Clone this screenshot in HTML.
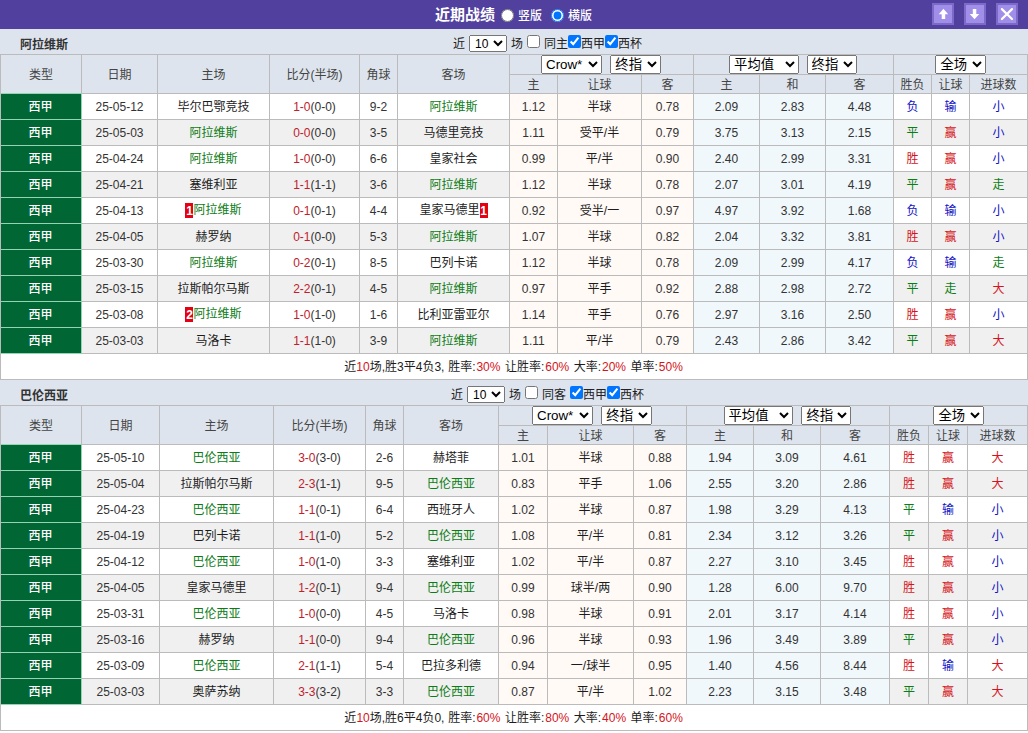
<!DOCTYPE html>
<html lang="zh-CN">
<head>
<meta charset="utf-8">
<title>近期战绩</title>
<style>
html,body{margin:0;padding:0;background:#fff;}
body{width:1028px;height:733px;overflow:hidden;position:relative;font-family:"Liberation Sans","Noto Sans CJK SC",sans-serif;font-size:12px;color:#333;}
#top{position:absolute;left:0;top:0;width:1028px;height:29px;background:#51409e;color:#fff;}
.ttl{position:absolute;left:0;top:0;width:1028px;height:29px;line-height:29px;white-space:nowrap;}
.ttl b{position:absolute;left:435px;top:0;font-size:15px;font-weight:700;}
.ttl input{position:absolute;margin:0;width:13px;height:13px;top:9px;}
.ttl .r1{left:501px;}
.ttl .r2{left:551px;}
.ttl span{position:absolute;top:2px;font-weight:500;}
.ttl .l1{left:518px;}
.ttl .l2{left:568px;}
.btns{position:absolute;right:0;top:0;}
.bt{position:absolute;top:3px;width:18px;height:18px;border:2px solid #7b6ac8;background:#a08ee8;}
.bt svg{display:block;}
.bt:nth-child(1){left:-96px;}
.bt:nth-child(2){left:-64px;}
.bt:nth-child(3){left:-32px;}
.cap{position:absolute;left:0;width:1028px;height:25px;background:#dee4ee;line-height:25px;white-space:nowrap;}
.cap1{top:29px;}
.cap2{top:380px;}
.cap .team{position:absolute;left:20px;top:4px;}
.cap span{position:absolute;top:3px;color:#222;}
.cap select{position:absolute;top:6px;width:37.5px;height:17px;font:12px "Liberation Sans","Noto Sans CJK SC",sans-serif;padding:0 1px 0 1px;margin:0;}
.cap input{position:absolute;top:6px;width:13px;height:13px;margin:0;}
.cap1 .k1{left:453px;} .cap1 .s10{left:469px;} .cap1 .k2{left:511px;} .cap1 .c1{left:527px;} .cap1 .k3{left:544px;}
.cap1 .c2{left:568px;} .cap1 .k4{left:581px;} .cap1 .c3{left:605px;} .cap1 .k5{left:618px;}
.cap2 .k1{left:451px;} .cap2 .s10{left:467px;} .cap2 .k2{left:509px;} .cap2 .c1{left:525px;} .cap2 .k3{left:542px;}
.cap2 .c2{left:570px;} .cap2 .k4{left:583px;} .cap2 .c3{left:607px;} .cap2 .k5{left:620px;}
table.tb{position:absolute;left:0;width:1028px;border-collapse:collapse;table-layout:fixed;}
.tb1{top:54px;}
.tb2{top:405px;}
.tb td,.tb th{border:1px solid #bbb;padding:0;text-align:center;font-weight:normal;white-space:nowrap;overflow:hidden;}
.tb td,.tb th{line-height:16px;}
.tb td{color:#1c1c1c;}
.tb td.n{color:#333;}
.tb th{background:#dee4ee;color:#444;padding-top:2px;}
.tb th.sc{padding:0;line-height:0;}
.tb tr.h1{height:20px;}
.tb tr.h2{height:19px;}
.tb tr.o,.tb tr.e,.tb tr.sm{height:26px;}
.tb tr.o td{background:#fff;}
.tb tr.e td{background:#f0f0f0;}
.tb tr td.as{background:#fffaf6;}
.tb tr td.eu{background:#f0f8fc;}
.tb tr td.lg{background:#006633;color:#fff;position:relative;overflow:visible;font-weight:500;}
.tb tr td.lg i{font-style:normal;position:relative;top:0;left:-0.5px;}
.tb tr td.lg::after{content:"";position:absolute;left:0;top:-1px;right:-1px;bottom:-1px;border:solid #96d2b4;border-width:1px 1px 1px 0;}
.tb tr.sm td{background:#fff;}
.tb th.sc{font-size:0;}
.tb select{height:19px;font:13.333px "Liberation Sans","Noto Sans CJK SC",sans-serif;padding:0;margin:0;vertical-align:top;}
.tb select{position:relative;}
.tb select.s1{left:-0.9px;width:60.5px !important;}
.tb select.s2{margin-left:8.3px;left:-0.4px;}
.tb select.s3{left:-0.7px;}
.tb select.s4{margin-left:7.5px;left:-0.7px;}
.tb2 select.s3{left:-1px;width:69.5px !important;}
.tb2 select.s4{left:-0.1px;}
.g,.tb td.g{color:#0c7c16;}
.r,.tb td.r{color:#d41420;}
.tb tr.sm td{word-spacing:0.42px;}
.tb tr.sm .p{padding:0 0.8px 0 0.9px;}
.b,.tb td.b{color:#1010c4;}
.sr{color:#c0202c;}
.rc{background:#e60012;color:#fff;font-weight:bold;display:inline-block;width:8px;height:15px;line-height:17px;vertical-align:middle;position:relative;top:-1px;overflow:hidden;}

</style>
</head>
<body>
<div id="top">
<div class="ttl"><b>近期战绩</b><input type="radio" name="v" class="r1"><span class="l1">竖版</span><input type="radio" name="v" class="r2" checked><span class="l2">横版</span></div>
<div class="btns">
<span class="bt"><svg width="18" height="18" viewBox="0 0 18 18"><path d="M9.45 3.7 L14.15 9.2 H11.2 V14.1 H7.7 V9.2 H4.75 Z" fill="#fff"/></svg></span>
<span class="bt"><svg width="18" height="18" viewBox="0 0 18 18"><path d="M8.5 14.2 L13.25 9 H10.3 V3.9 H6.8 V9 H3.75 Z" fill="#fff"/></svg></span>
<span class="bt"><svg width="18" height="18" viewBox="0 0 18 18"><path d="M3.9 4.1 L14 14 M14 4.1 L3.9 14" stroke="#fff" stroke-width="2.2" stroke-linecap="round" fill="none"/></svg></span>
</div>
</div>
<div class="cap cap1"><b class="team">阿拉维斯</b><span class="k1">近</span><select class="s10"><option>10</option></select><span class="k2">场</span><input type="checkbox" class="c1"><span class="k3">同主</span><input type="checkbox" class="c2" checked><span class="k4">西甲</span><input type="checkbox" class="c3" checked><span class="k5">西杯</span></div>
<table class="tb tb1"><colgroup><col style="width:81px"><col style="width:76px"><col style="width:112px"><col style="width:90px"><col style="width:38px"><col style="width:112px"><col style="width:48px"><col style="width:84px"><col style="width:52px"><col style="width:66px"><col style="width:66px"><col style="width:68px"><col style="width:38px"><col style="width:38px"><col style="width:58px"></colgroup>
<tr class="h1"><th rowspan="2">类型</th><th rowspan="2">日期</th><th rowspan="2">主场</th><th rowspan="2">比分(半场)</th><th rowspan="2">角球</th><th rowspan="2">客场</th><th colspan="3" class="sc"><select class="sa s1" style="width:60px"><option>Crow*</option></select><select class="sb s2" style="width:50.4px"><option>终指</option></select></th><th colspan="3" class="sc"><select class="sa s3" style="width:70px"><option>平均值</option></select><select class="sb s4" style="width:50px"><option>终指</option></select></th><th colspan="3" class="sc"><select class="sa s5" style="width:50.2px"><option>全场</option></select></th></tr>
<tr class="h2"><th>主</th><th>让球</th><th>客</th><th>主</th><th>和</th><th>客</th><th>胜负</th><th>让球</th><th>进球数</th></tr>
<tr class="o"><td class="lg"><i>西甲</i></td><td class="n">25-05-12</td><td>毕尔巴鄂竞技</td><td class="n"><span class="sr">1-0</span>(0-0)</td><td class="n">9-2</td><td><span class="g">阿拉维斯</span></td><td class="as n">1.12</td><td class="as">半球</td><td class="as n">0.78</td><td class="eu n">2.09</td><td class="eu n">2.83</td><td class="eu n">4.48</td><td class="b">负</td><td class="b">输</td><td class="b">小</td></tr>
<tr class="e"><td class="lg"><i>西甲</i></td><td class="n">25-05-03</td><td><span class="g">阿拉维斯</span></td><td class="n"><span class="sr">0-0</span>(0-0)</td><td class="n">3-5</td><td>马德里竞技</td><td class="as n">1.11</td><td class="as">受平/半</td><td class="as n">0.79</td><td class="eu n">3.75</td><td class="eu n">3.13</td><td class="eu n">2.15</td><td class="g">平</td><td class="r">赢</td><td class="b">小</td></tr>
<tr class="o"><td class="lg"><i>西甲</i></td><td class="n">25-04-24</td><td><span class="g">阿拉维斯</span></td><td class="n"><span class="sr">1-0</span>(0-0)</td><td class="n">6-6</td><td>皇家社会</td><td class="as n">0.99</td><td class="as">平/半</td><td class="as n">0.90</td><td class="eu n">2.40</td><td class="eu n">2.99</td><td class="eu n">3.31</td><td class="r">胜</td><td class="r">赢</td><td class="b">小</td></tr>
<tr class="e"><td class="lg"><i>西甲</i></td><td class="n">25-04-21</td><td>塞维利亚</td><td class="n"><span class="sr">1-1</span>(1-1)</td><td class="n">3-6</td><td><span class="g">阿拉维斯</span></td><td class="as n">1.12</td><td class="as">半球</td><td class="as n">0.78</td><td class="eu n">2.07</td><td class="eu n">3.01</td><td class="eu n">4.19</td><td class="g">平</td><td class="r">赢</td><td class="g">走</td></tr>
<tr class="o"><td class="lg"><i>西甲</i></td><td class="n">25-04-13</td><td><span class="rc">1</span><span class="g">阿拉维斯</span></td><td class="n"><span class="sr">0-1</span>(0-1)</td><td class="n">4-4</td><td>皇家马德里<span class="rc">1</span></td><td class="as n">0.92</td><td class="as">受半/一</td><td class="as n">0.97</td><td class="eu n">4.97</td><td class="eu n">3.92</td><td class="eu n">1.68</td><td class="b">负</td><td class="b">输</td><td class="b">小</td></tr>
<tr class="e"><td class="lg"><i>西甲</i></td><td class="n">25-04-05</td><td>赫罗纳</td><td class="n"><span class="sr">0-1</span>(0-0)</td><td class="n">5-3</td><td><span class="g">阿拉维斯</span></td><td class="as n">1.07</td><td class="as">半球</td><td class="as n">0.82</td><td class="eu n">2.04</td><td class="eu n">3.32</td><td class="eu n">3.81</td><td class="r">胜</td><td class="r">赢</td><td class="b">小</td></tr>
<tr class="o"><td class="lg"><i>西甲</i></td><td class="n">25-03-30</td><td><span class="g">阿拉维斯</span></td><td class="n"><span class="sr">0-2</span>(0-1)</td><td class="n">8-5</td><td>巴列卡诺</td><td class="as n">1.12</td><td class="as">半球</td><td class="as n">0.78</td><td class="eu n">2.09</td><td class="eu n">2.99</td><td class="eu n">4.17</td><td class="b">负</td><td class="b">输</td><td class="g">走</td></tr>
<tr class="e"><td class="lg"><i>西甲</i></td><td class="n">25-03-15</td><td>拉斯帕尔马斯</td><td class="n"><span class="sr">2-2</span>(0-1)</td><td class="n">4-5</td><td><span class="g">阿拉维斯</span></td><td class="as n">0.97</td><td class="as">平手</td><td class="as n">0.92</td><td class="eu n">2.88</td><td class="eu n">2.98</td><td class="eu n">2.72</td><td class="g">平</td><td class="g">走</td><td class="r">大</td></tr>
<tr class="o"><td class="lg"><i>西甲</i></td><td class="n">25-03-08</td><td><span class="rc">2</span><span class="g">阿拉维斯</span></td><td class="n"><span class="sr">1-0</span>(1-0)</td><td class="n">1-6</td><td>比利亚雷亚尔</td><td class="as n">1.14</td><td class="as">平手</td><td class="as n">0.76</td><td class="eu n">2.97</td><td class="eu n">3.16</td><td class="eu n">2.50</td><td class="r">胜</td><td class="r">赢</td><td class="b">小</td></tr>
<tr class="e"><td class="lg"><i>西甲</i></td><td class="n">25-03-03</td><td>马洛卡</td><td class="n"><span class="sr">1-1</span>(1-0)</td><td class="n">3-9</td><td><span class="g">阿拉维斯</span></td><td class="as n">1.11</td><td class="as">平/半</td><td class="as n">0.79</td><td class="eu n">2.43</td><td class="eu n">2.86</td><td class="eu n">3.42</td><td class="g">平</td><td class="r">赢</td><td class="r">大</td></tr>
<tr class="sm"><td colspan="15">近<span class="r">10</span>场,胜3平4负3, 胜率:<span class="r p">30%</span> 让胜率:<span class="r p">60%</span> 大率:<span class="r p">20%</span> 单率:<span class="r p">50%</span></td></tr>
</table>
<div class="cap cap2"><b class="team">巴伦西亚</b><span class="k1">近</span><select class="s10"><option>10</option></select><span class="k2">场</span><input type="checkbox" class="c1"><span class="k3">同客</span><input type="checkbox" class="c2" checked><span class="k4">西甲</span><input type="checkbox" class="c3" checked><span class="k5">西杯</span></div>
<table class="tb tb2"><colgroup><col style="width:81px"><col style="width:78px"><col style="width:114px"><col style="width:92px"><col style="width:38px"><col style="width:95px"><col style="width:49px"><col style="width:86px"><col style="width:53px"><col style="width:67px"><col style="width:67px"><col style="width:69px"><col style="width:39px"><col style="width:39px"><col style="width:60px"></colgroup>
<tr class="h1"><th rowspan="2">类型</th><th rowspan="2">日期</th><th rowspan="2">主场</th><th rowspan="2">比分(半场)</th><th rowspan="2">角球</th><th rowspan="2">客场</th><th colspan="3" class="sc"><select class="sa s1" style="width:60px"><option>Crow*</option></select><select class="sb s2" style="width:50.4px"><option>终指</option></select></th><th colspan="3" class="sc"><select class="sa s3" style="width:70px"><option>平均值</option></select><select class="sb s4" style="width:50px"><option>终指</option></select></th><th colspan="3" class="sc"><select class="sa s5" style="width:50.2px"><option>全场</option></select></th></tr>
<tr class="h2"><th>主</th><th>让球</th><th>客</th><th>主</th><th>和</th><th>客</th><th>胜负</th><th>让球</th><th>进球数</th></tr>
<tr class="o"><td class="lg"><i>西甲</i></td><td class="n">25-05-10</td><td><span class="g">巴伦西亚</span></td><td class="n"><span class="sr">3-0</span>(3-0)</td><td class="n">2-6</td><td>赫塔菲</td><td class="as n">1.01</td><td class="as">半球</td><td class="as n">0.88</td><td class="eu n">1.94</td><td class="eu n">3.09</td><td class="eu n">4.61</td><td class="r">胜</td><td class="r">赢</td><td class="r">大</td></tr>
<tr class="e"><td class="lg"><i>西甲</i></td><td class="n">25-05-04</td><td>拉斯帕尔马斯</td><td class="n"><span class="sr">2-3</span>(1-1)</td><td class="n">9-5</td><td><span class="g">巴伦西亚</span></td><td class="as n">0.83</td><td class="as">平手</td><td class="as n">1.06</td><td class="eu n">2.55</td><td class="eu n">3.20</td><td class="eu n">2.86</td><td class="r">胜</td><td class="r">赢</td><td class="r">大</td></tr>
<tr class="o"><td class="lg"><i>西甲</i></td><td class="n">25-04-23</td><td><span class="g">巴伦西亚</span></td><td class="n"><span class="sr">1-1</span>(0-1)</td><td class="n">6-4</td><td>西班牙人</td><td class="as n">1.02</td><td class="as">半球</td><td class="as n">0.87</td><td class="eu n">1.98</td><td class="eu n">3.29</td><td class="eu n">4.13</td><td class="g">平</td><td class="b">输</td><td class="b">小</td></tr>
<tr class="e"><td class="lg"><i>西甲</i></td><td class="n">25-04-19</td><td>巴列卡诺</td><td class="n"><span class="sr">1-1</span>(1-0)</td><td class="n">5-2</td><td><span class="g">巴伦西亚</span></td><td class="as n">1.08</td><td class="as">平/半</td><td class="as n">0.81</td><td class="eu n">2.34</td><td class="eu n">3.12</td><td class="eu n">3.26</td><td class="g">平</td><td class="r">赢</td><td class="b">小</td></tr>
<tr class="o"><td class="lg"><i>西甲</i></td><td class="n">25-04-12</td><td><span class="g">巴伦西亚</span></td><td class="n"><span class="sr">1-0</span>(1-0)</td><td class="n">3-3</td><td>塞维利亚</td><td class="as n">1.02</td><td class="as">平/半</td><td class="as n">0.87</td><td class="eu n">2.27</td><td class="eu n">3.10</td><td class="eu n">3.45</td><td class="r">胜</td><td class="r">赢</td><td class="b">小</td></tr>
<tr class="e"><td class="lg"><i>西甲</i></td><td class="n">25-04-05</td><td>皇家马德里</td><td class="n"><span class="sr">1-2</span>(0-1)</td><td class="n">9-4</td><td><span class="g">巴伦西亚</span></td><td class="as n">0.99</td><td class="as">球半/两</td><td class="as n">0.90</td><td class="eu n">1.28</td><td class="eu n">6.00</td><td class="eu n">9.70</td><td class="r">胜</td><td class="r">赢</td><td class="b">小</td></tr>
<tr class="o"><td class="lg"><i>西甲</i></td><td class="n">25-03-31</td><td><span class="g">巴伦西亚</span></td><td class="n"><span class="sr">1-0</span>(0-0)</td><td class="n">4-5</td><td>马洛卡</td><td class="as n">0.98</td><td class="as">半球</td><td class="as n">0.91</td><td class="eu n">2.01</td><td class="eu n">3.17</td><td class="eu n">4.14</td><td class="r">胜</td><td class="r">赢</td><td class="b">小</td></tr>
<tr class="e"><td class="lg"><i>西甲</i></td><td class="n">25-03-16</td><td>赫罗纳</td><td class="n"><span class="sr">1-1</span>(0-0)</td><td class="n">9-4</td><td><span class="g">巴伦西亚</span></td><td class="as n">0.96</td><td class="as">半球</td><td class="as n">0.93</td><td class="eu n">1.96</td><td class="eu n">3.49</td><td class="eu n">3.89</td><td class="g">平</td><td class="r">赢</td><td class="b">小</td></tr>
<tr class="o"><td class="lg"><i>西甲</i></td><td class="n">25-03-09</td><td><span class="g">巴伦西亚</span></td><td class="n"><span class="sr">2-1</span>(1-1)</td><td class="n">5-4</td><td>巴拉多利德</td><td class="as n">0.94</td><td class="as">一/球半</td><td class="as n">0.95</td><td class="eu n">1.40</td><td class="eu n">4.56</td><td class="eu n">8.44</td><td class="r">胜</td><td class="b">输</td><td class="r">大</td></tr>
<tr class="e"><td class="lg"><i>西甲</i></td><td class="n">25-03-03</td><td>奥萨苏纳</td><td class="n"><span class="sr">3-3</span>(3-2)</td><td class="n">3-3</td><td><span class="g">巴伦西亚</span></td><td class="as n">0.87</td><td class="as">平/半</td><td class="as n">1.02</td><td class="eu n">2.23</td><td class="eu n">3.15</td><td class="eu n">3.48</td><td class="g">平</td><td class="r">赢</td><td class="r">大</td></tr>
<tr class="sm"><td colspan="15">近<span class="r">10</span>场,胜6平4负0, 胜率:<span class="r p">60%</span> 让胜率:<span class="r p">80%</span> 大率:<span class="r p">40%</span> 单率:<span class="r p">60%</span></td></tr>
</table>
</body>
</html>
